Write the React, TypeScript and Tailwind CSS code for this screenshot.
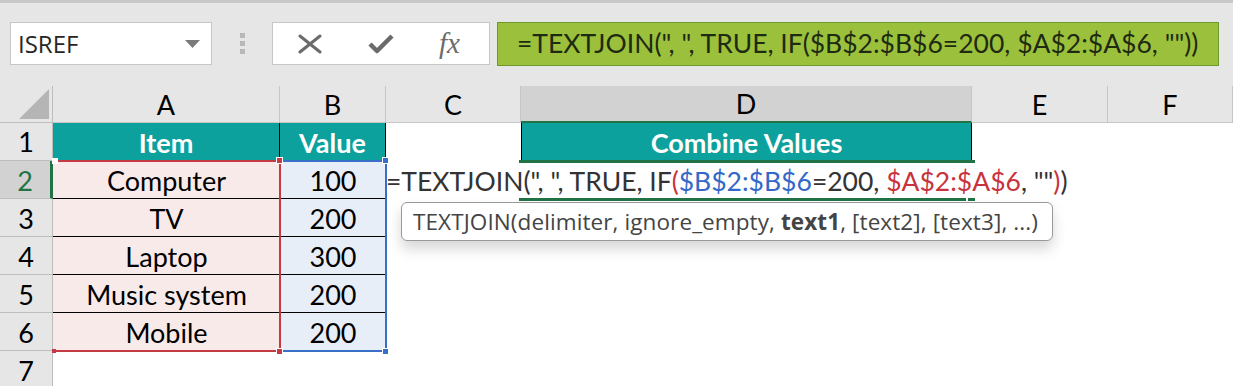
import React from 'react';

const CELL_FONT = { fontFamily: 'Lato, "Liberation Sans", sans-serif' };
const UI_FONT = { fontFamily: '"Open Sans", "Noto Sans", sans-serif' };

const columns = ['A', 'B', 'C', 'D', 'E', 'F'];

const rows: { item: string; value: string }[] = [
  { item: 'Computer', value: '100' },
  { item: 'TV', value: '200' },
  { item: 'Laptop', value: '300' },
  { item: 'Music system', value: '200' },
  { item: 'Mobile', value: '200' },
];

const FormulaBar: React.FC = () => (
  <div className="h-[86px] border-t-[3px] border-[#c8c8c8] flex items-start pt-[19px]">
    {/* name box */}
    <div className="ml-[10px] w-[202px] h-[43px] bg-white border border-[#c6c6c6] flex items-center justify-between pl-[7px] pr-[11px]">
      <span className="text-[24px] text-[#262626]" style={UI_FONT}>ISREF</span>
      <svg width="15" height="8" viewBox="0 0 15 8">
        <path d="M0 0 L15 0 L7.5 8 Z" fill="#7a7a7a" />
      </svg>
    </div>
    {/* grip dots */}
    <div className="w-[60px] h-[43px] flex flex-col items-center justify-center gap-[3px]">
      <div className="w-[5px] h-[5px] bg-[#b9b9b9]" />
      <div className="w-[5px] h-[5px] bg-[#b9b9b9]" />
      <div className="w-[5px] h-[5px] bg-[#b9b9b9]" />
    </div>
    {/* cancel / enter / fx */}
    <div className="w-[218px] h-[43px] bg-white border border-[#c6c6c6] flex items-center pl-[25px]">
      <svg width="24" height="20" viewBox="0 0 24 20">
        <path d="M2 2 L22 18 M22 2 L2 18" stroke="#6b6b6b" strokeWidth="3" strokeLinecap="round" />
      </svg>
      <svg width="28" height="22" viewBox="0 0 28 22" className="ml-[45px]">
        <path d="M3 11 L10 18 L25 3" stroke="#6b6b6b" strokeWidth="4.5" fill="none" strokeLinejoin="round" />
      </svg>
      <span
        className="ml-[44px] text-[29px] italic text-[#6b6b6b] leading-none"
        style={{ fontFamily: '"Liberation Serif", serif' }}
      >
        fx
      </span>
    </div>
    {/* formula box */}
    <div className="ml-[7px] w-[722px] h-[44px] bg-[#9bc13c] border border-[#6f9a2b] flex items-center pl-[19px]">
      <span className="text-[26.5px] text-[#1f2a12] whitespace-pre" style={CELL_FONT}>
        =TEXTJOIN(", ", TRUE, IF($B$2:$B$6=200, $A$2:$A$6, ""))
      </span>
    </div>
  </div>
);

const App: React.FC = () => {
  return (
    <div className="w-[1233px] h-[386px] overflow-hidden bg-[#e6e6e6] relative">
      <FormulaBar />

      <div className="relative">
        <div
          className="grid grid-cols-[53px_227px_106px_135px_451px_136px_1fr] grid-rows-[37px_repeat(7,38px)] text-black"
          style={CELL_FONT}
        >
          {/* corner */}
          <div className="bg-[#e6e6e6] border-r border-b border-[#bdbdbd] flex items-end justify-end pr-[3px] pb-[3px]">
            <svg width="30" height="30" viewBox="0 0 30 30">
              <path d="M30 0 L30 30 L0 30 Z" fill="#b5b5b5" />
            </svg>
          </div>
          {columns.map(c => (
            <div
              key={c}
              className={
                c === 'D'
                  ? 'bg-[#d2d2d2] border-r border-[#c6c6c6] border-b-[2px] border-b-[#217346] flex items-center justify-center pt-[2px] text-[27px]'
                  : 'bg-[#e6e6e6] border-r border-b border-[#c6c6c6] flex items-center justify-center pt-[2px] text-[27px]'
              }
            >
              {c}
            </div>
          ))}

          {/* row 1 */}
          <div className="bg-[#e6e6e6] border-r border-b border-[#bdbdbd] flex items-center justify-center pt-[2px] text-[27px]">1</div>
          <div className="bg-[#0ca19c] border-r border-black flex items-center justify-center pt-[3px] text-[27px] font-bold text-white">Item</div>
          <div className="bg-[#0ca19c] border-r border-black flex items-center justify-center pt-[3px] text-[27px] font-bold text-white">Value</div>
          <div className="bg-white" />
          <div className="bg-[#0ca19c] border-l border-r border-black flex items-center justify-center pt-[3px] text-[27px] font-bold text-white">
            Combine Values
          </div>
          <div className="bg-white" />
          <div className="bg-white" />

          {/* data rows */}
          {rows.map((r, i) => {
            const n = i + 2;
            const last = i === rows.length - 1;
            return (
              <React.Fragment key={n}>
                <div
                  className={
                    n === 2
                      ? 'bg-[#d2d2d2] border-r-[3px] border-r-[#217346] border-b border-[#bdbdbd] flex items-center justify-center pt-[3px] text-[27px] text-[#217346]'
                      : 'bg-[#e6e6e6] border-r border-b border-[#bdbdbd] flex items-center justify-center pt-[3px] text-[27px]'
                  }
                >
                  {n}
                </div>
                <div className={`bg-[#f9eaea] ${last ? '' : 'border-b border-black'} flex items-center justify-center pt-[3px] text-[27px]`}>
                  {r.item}
                </div>
                <div className={`bg-[#e8eef8] ${last ? '' : 'border-b border-black'} flex items-center justify-center pt-[3px] text-[27px]`}>
                  {r.value}
                </div>
                <div className="bg-white" />
                <div className="bg-white" />
                <div className="bg-white" />
                <div className="bg-white" />
              </React.Fragment>
            );
          })}

          {/* row 7 */}
          <div className="bg-[#e6e6e6] border-r border-[#bdbdbd] flex items-center justify-center pt-[3px] text-[27px]">7</div>
          <div className="bg-white col-span-6" />
        </div>

        {/* range highlight: A2:A6 */}
        <div className="absolute left-[54px] top-[74px] w-[227px] h-[192px] border-t-2 border-r-2 border-b-2 border-[#c43b45]" />
        {/* range highlight: B2:B6 */}
        <div className="absolute left-[281px] top-[74px] w-[106px] h-[192px] border-t-2 border-r-2 border-b-2 border-[#3a6fc8]" />
        {/* range handles */}
        <div className="absolute left-[52px] top-[72px] w-[6px] h-[6px] bg-white" />
        <div className="absolute left-[276px] top-[71px] w-[7px] h-[7px] bg-[#c43b45] border border-white" />
        <div className="absolute left-[382px] top-[71px] w-[7px] h-[7px] bg-[#3a6fc8] border border-white" />
        <div className="absolute left-[52px] top-[263px] w-[4px] h-[4px] bg-[#c43b45]" />
        <div className="absolute left-[276px] top-[262px] w-[7px] h-[7px] bg-[#c43b45] border border-white" />
        <div className="absolute left-[382px] top-[262px] w-[7px] h-[7px] bg-[#3a6fc8] border border-white" />

        {/* in-cell editor */}
        <div className="absolute left-[387px] top-[77px] h-[35px] pr-[4px] pt-[3px] bg-white flex items-center">
          <span className="text-[26.5px] whitespace-pre text-[#333333] -ml-[1px]" style={CELL_FONT}>
            =TEXTJOIN(", ", TRUE, IF<span className="text-[#c8333d]">(</span>
            <span className="text-[#3468c8]">$B$2:$B$6</span>=200, <span className="text-[#c8333d]">$A$2:$A$6</span>, ""
            <span className="text-[#c8333d]">)</span>)
          </span>
        </div>

        {/* active cell D2 */}
        <div className="absolute left-[519px] top-[74px] w-[456px] h-[3px] bg-[#217346]" />
        <div className="absolute left-[519px] top-[112px] w-[447px] h-[3px] bg-[#217346]" />
        <div className="absolute left-[968px] top-[112px] w-[7px] h-[3px] bg-[#217346]" />

        {/* function tooltip */}
        <div
          className="absolute left-[401px] top-[116px] w-[652px] h-[39px] bg-white border-[1.5px] border-[#999999] rounded-[6px] shadow-[0_8px_14px_rgba(0,0,0,0.16)] flex items-center pl-[11px]"
        >
          <span className="text-[22.5px] text-[#444444] whitespace-pre tracking-[0.1px]" style={UI_FONT}>
            TEXTJOIN(delimiter, ignore_empty, <span className="font-bold">text1</span>, [text2], [text3], ...)
          </span>
        </div>
      </div>
    </div>
  );
};

export default App;
